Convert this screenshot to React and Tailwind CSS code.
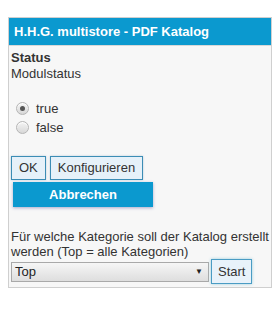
function Radio({ checked }) {
  return (
    <span className="w-[13px] h-[13px] mr-[7px] rounded-full border border-[#b5b5b5] bg-gradient-to-b from-[#f4f4f4] to-[#d8d8d8] flex items-center justify-center shadow-[inset_0_1px_1px_#fff]">
      {checked && <span className="w-[5px] h-[5px] rounded-full bg-[#555]" />}
    </span>
  );
}

export default function App() {
  const font = { fontFamily: '"Liberation Sans", Arial, sans-serif' };
  return (
    <div className="w-[276px] h-[327px] bg-white pt-[17px] pl-[8px]" style={font}>
      <div className="w-[264px] border border-[#cfcfcf] bg-[#f7f7f7]">
        <div className="h-[28px] bg-[#0b99cf] text-white font-bold text-[13px] leading-[28px] pl-[5px] border-b border-[#d8d8d8]">
          H.H.G. multistore - PDF Katalog
        </div>
        <div className="pl-[2px] pr-[2px] pt-[4px] pb-[3px] text-[13px] leading-[16px] text-[#333]">
          <div className="font-bold">Status</div>
          <div>Modulstatus</div>
          <div className="h-[17px]" />
          <div className="flex items-center h-[19px] pl-[5px]">
            <Radio checked />
            <span>true</span>
          </div>
          <div className="flex items-center h-[19px] pl-[5px]">
            <Radio />
            <span>false</span>
          </div>
          <div className="h-[19px]" />
          <div className="flex gap-[4px]">
            <button className="h-[24px] px-[7px] border border-[#3c8db5] bg-[#e6f1f9] text-[#333] text-[13px] shadow-[0_0_2px_#bcd]">OK</button>
            <button className="h-[24px] px-[7px] border border-[#3c8db5] bg-[#e6f1f9] text-[#333] text-[13px] shadow-[0_0_2px_#bcd]">Konfigurieren</button>
          </div>
          <div className="pl-[2px] pt-[2px]">
            <button className="w-[140px] h-[25px] bg-[#0b99cf] text-white font-bold text-[13px] shadow-[0_1px_3px_#aac]">Abbrechen</button>
          </div>
          <div className="h-[22px]" />
          <div className="leading-[15px]">Für welche Kategorie soll der Katalog erstellt werden (Top = alle Kategorien)</div>
          <div className="flex items-center">
            <div className="w-[198px] h-[20px] border border-[#a9a9a9] bg-gradient-to-b from-[#f6f6f6] to-[#dedede] flex items-center justify-between pl-[3px] pr-[5px] text-[13px] text-[#222]">
              <span>Top</span>
              <span className="text-[8px]">▼</span>
            </div>
            <button className="ml-[2px] h-[25px] px-[6px] border border-[#4a9cc4] bg-[#e8f2fa] text-[#333] text-[13px] shadow-[0_0_3px_#9cd]">Start</button>
          </div>
        </div>
      </div>
    </div>
  );
}
